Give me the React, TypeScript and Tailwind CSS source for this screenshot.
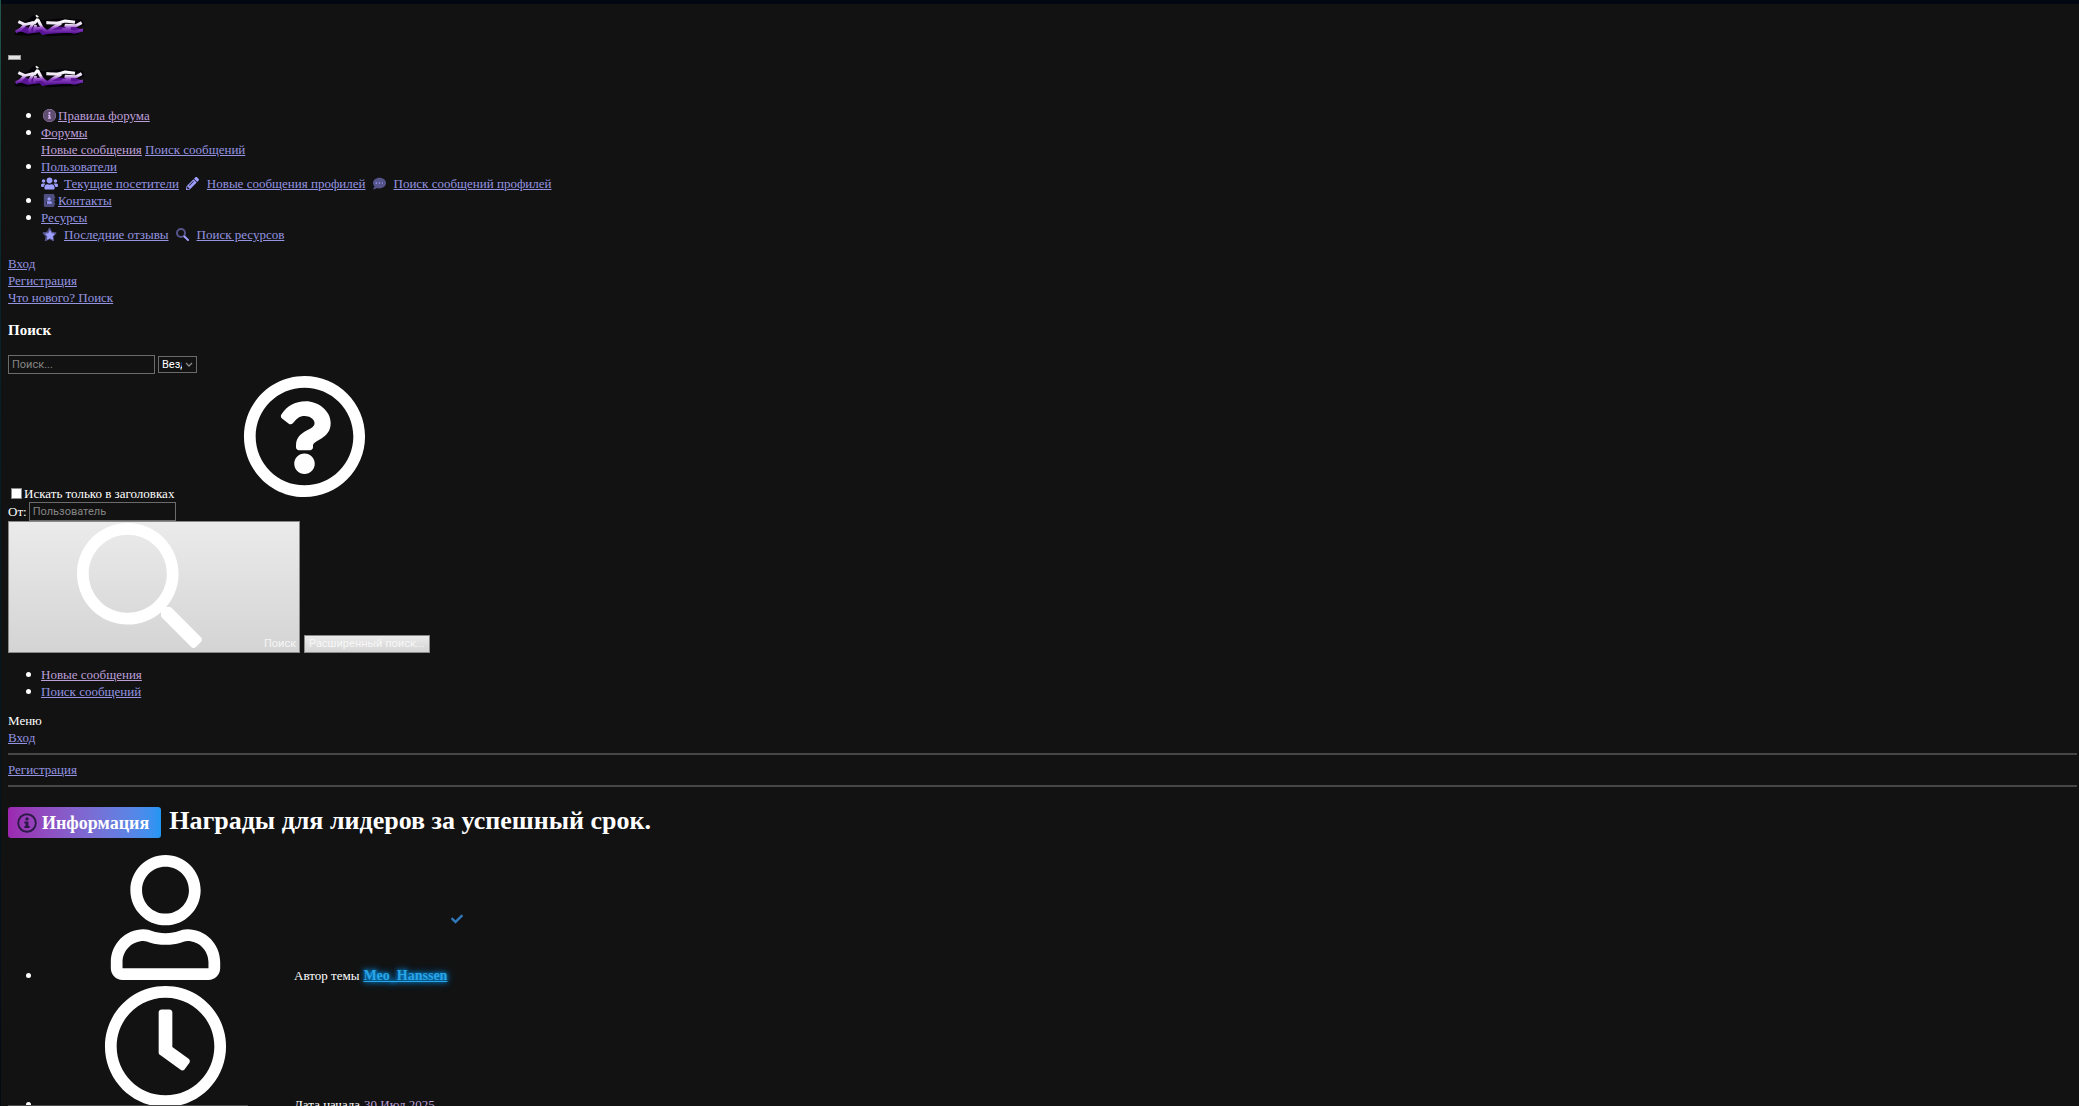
import type { ReactNode } from 'react';
import {
  FaAddressBook,
  FaCheck,
  FaCommentDots,
  FaInfoCircle,
  FaPencilAlt,
  FaRegClock,
  FaRegQuestionCircle,
  FaRegUser,
  FaStar,
  FaUsers,
} from 'react-icons/fa';

const searchPath =
  'M508.5 468.9L387.1 347.5c-2.3-2.3-5.3-3.5-8.5-3.5h-13.2c31.5-36.5 50.6-84 50.6-136C416 93.1 322.9 0 208 0S0 93.1 0 208s93.1 208 208 208c52 0 99.5-19.1 136-50.6v13.2c0 3.2 1.3 6.2 3.5 8.5l121.4 121.4c4.7 4.7 12.3 4.7 17 0l22.6-22.6c4.7-4.7 4.7-12.3 0-17zM208 368c-88.4 0-160-71.6-160-160S119.6 48 208 48s160 71.6 160 160-71.6 160-160 160z';

function Logo({ id }: { id: string }) {
  return (
    <svg viewBox="40 40 216 72" className="block h-6 w-[72px]" aria-label="Maze" fill="none">
      <defs>
        <linearGradient id={id} gradientUnits="userSpaceOnUse" x1="0" y1="62" x2="0" y2="104">
          <stop offset="0" stopColor="#ffffff" />
          <stop offset="0.3" stopColor="#e9dcf2" />
          <stop offset="0.55" stopColor="#9347c4" />
          <stop offset="1" stopColor="#4a0a8c" />
        </linearGradient>
      </defs>
      <path d="M44 106L62 74L54 60L78 66L102 46L128 62L190 56L248 60L254 76L238 84L256 92L232 106L140 110L128 102L84 108Z" fill="#050308" />
      <path d="M48 98L66 84L78 80L92 88L104 80L128 82L148 92L168 80L196 82L214 78L232 84L252 90L232 100L190 100L150 102L128 106L120 98L84 102L66 96Z" fill="#5a1596" />
      <g stroke={`url(#${id})`} strokeWidth="9" strokeLinejoin="bevel">
        <path d="M56 66L76 75L63 88L48 97M76 75L102 68L90 88L92 100" />
        <path d="M103 72L114 59L126 82L142 99M108 76L103 97M104 87L130 85" />
        <path d="M140 69L184 71L160 84L144 97L200 93" />
        <path d="M170 72L196 64L226 68M246 69L230 78L196 77L212 87L188 90L224 98L250 91" />
      </g>
      <path d="M107 48L111 45L118 51L112 54ZM140 65L149 66L144 71Z" fill="#e8f0e4" />
    </svg>
  );
}

function Anchor({ children, visited = false }: { children: ReactNode; visited?: boolean }) {
  return (
    <a href="#" className={visited ? 'text-[#bd9fd8] underline' : 'text-[#9494e0] underline'}>
      {children}
    </a>
  );
}

function IconLink({ icon, children }: { icon: ReactNode; children: ReactNode }) {
  return (
    <a href="#" className="flex items-center gap-1.5 text-[#9e9eff]">
      <span className="flex w-[17px] justify-center">{icon}</span>
      <span className="text-[#9494e0] underline">{children}</span>
    </a>
  );
}

function Item({ children }: { children: ReactNode }) {
  return (
    <li className="flex">
      <span className="mt-1.5 mr-2.5 h-[5px] w-[5px] rounded-full bg-white" />
      <div>{children}</div>
    </li>
  );
}

function TallItem({ icon, children }: { icon: ReactNode; children: ReactNode }) {
  return (
    <li className="flex items-end">
      <span className="mr-[9px] mb-1.5 h-[5px] w-[5px] rounded-full bg-white" />
      <span className="mr-1 mb-1 flex w-[250px] justify-center">{icon}</span>
      {children}
    </li>
  );
}

const fieldClass =
  'h-[19px] w-[147px] border border-[#6b6b6b] bg-[#121212] px-[3px] font-[Roboto,sans-serif] text-[11px] text-white placeholder:text-[#858585]';

export default function App() {
  return (
    <div className="relative h-screen overflow-hidden bg-[#121212] pt-[13px] pr-0.5 pl-2 font-['Liberation_Serif',serif] text-[13px] leading-[17px] text-white">
      <div className="absolute inset-x-0 top-0 h-1 bg-[#020812]" />
      <div className="absolute inset-y-0 left-0 w-px bg-linear-to-b from-[#23584c] via-[#07242a] via-25% to-[#030a14]" />
      <div className="absolute bottom-0 left-2 h-px w-60 bg-[#4a4a4a]" />

      <header>
        <a href="#" className="ml-[5px] block w-[72px]">
          <Logo id="logo-top" />
        </a>
        <button
          aria-label="Меню"
          className="mt-[18px] block h-[5px] w-[13px] border border-[#9a9a9a] bg-[#e2e2e2]"
        />
        <a href="#" className="mt-1 ml-[5px] block w-[72px]">
          <Logo id="logo-nav" />
        </a>
      </header>

      <nav className="mt-[19px]">
        <ul className="pl-[18px]">
          <Item>
            <a href="#" className="flex items-center text-[#d0adf0]">
              <span className="flex w-[17px] justify-center">
                <span className="flex h-[13px] w-[13px] items-center justify-center rounded-full bg-[#d8b8f4]">
                  <FaInfoCircle className="h-[13px] w-[13px] shrink-0 text-[#5f4e6f]" />
                </span>
              </span>
              <span className="text-[#bd9fd8] underline">Правила форума</span>
            </a>
          </Item>
          <Item>
            <Anchor visited>Форумы</Anchor>
            <div>
              <Anchor visited>Новые сообщения</Anchor> <Anchor>Поиск сообщений</Anchor>
            </div>
          </Item>
          <Item>
            <Anchor>Пользователи</Anchor>
            <div className="flex gap-[5px]">
              <IconLink icon={<FaUsers className="h-[17px] w-[17px]" />}>Текущие посетители</IconLink>
              <IconLink icon={<FaPencilAlt className="h-[13px] w-[13px]" />}>Новые сообщения профилей</IconLink>
              <IconLink
                icon={
                  <span className="flex bg-[linear-gradient(#9e9eff,#9e9eff)] bg-[length:8px_3px] bg-center bg-no-repeat">
                    <FaCommentDots className="h-[13px] w-[13px] text-[#55558c]" />
                  </span>
                }
              >
                Поиск сообщений профилей
              </IconLink>
            </div>
          </Item>
          <Item>
            <a href="#" className="flex items-center text-[#9e9eff]">
              <span className="flex w-[17px] justify-center">
                <span className="flex bg-[linear-gradient(#9e9eff,#9e9eff)] bg-[length:6px_7px] bg-center bg-no-repeat">
                  <FaAddressBook className="h-[13px] w-[13px] text-[#4e4e80]" />
                </span>
              </span>
              <span className="text-[#9494e0] underline">Контакты</span>
            </a>
          </Item>
          <Item>
            <Anchor>Ресурсы</Anchor>
            <div className="flex gap-[5px]">
              <IconLink
                icon={
                  <span className="grid place-items-center">
                    <FaStar className="col-start-1 row-start-1 h-[15px] w-[15px] text-[#55558c]" />
                    <FaStar className="col-start-1 row-start-1 h-[10px] w-[10px]" />
                  </span>
                }
              >
                Последние отзывы
              </IconLink>
              <IconLink
                icon={
                  <svg viewBox="0 0 13 13" className="h-[13px] w-[13px]" fill="none">
                    <circle cx="5" cy="5" r="4" stroke="#55558c" strokeWidth="2" />
                    <path d="M8.5 8.5L12 12" stroke="#9e9eff" strokeWidth="2" strokeLinecap="round" />
                  </svg>
                }
              >
                Поиск ресурсов
              </IconLink>
            </div>
          </Item>
        </ul>
      </nav>

      <div className="mt-3 flex flex-col items-start">
        <Anchor>Вход</Anchor>
        <Anchor>Регистрация</Anchor>
        <Anchor>Что нового? Поиск</Anchor>
      </div>

      <form>
        <h3 className="mt-3.5 text-[15px] leading-5 font-bold">Поиск</h3>
        <div className="mt-[15px] flex items-center gap-[3px]">
          <input type="text" aria-label="Поиск" placeholder="Поиск..." className={fieldClass} />
          <span className="relative flex">
            <select
              aria-label="Где искать"
              className="h-[17px] w-[39px] appearance-none border border-[#6b6b6b] bg-[#121212] pr-3.5 pl-[3px] font-[Roboto,sans-serif] text-[11px] leading-[15px] text-white"
            >
              <option>Везде</option>
            </select>
            <svg viewBox="0 0 8 5" className="absolute top-[6px] right-1 h-[5px] w-2" fill="none">
              <path d="M1 1L4 4L7 1" stroke="#8a8a8a" strokeWidth="1.3" />
            </svg>
          </span>
        </div>
        <div className="flex items-end">
          <label className="flex items-center">
            <input
              type="checkbox"
              className="mr-0.5 ml-[3px] h-[11px] w-[11px] appearance-none border border-[#8a8a8a] bg-white"
            />
            Искать только в заголовках
          </label>
          <span className="mb-[3px] ml-[5px] flex w-[250px] justify-center">
            <FaRegQuestionCircle className="h-[125px] w-[125px]" />
          </span>
        </div>
        <div className="flex items-center gap-0.5">
          <label htmlFor="author">От:</label>
          <input id="author" type="text" placeholder="Пользователь" className={fieldClass} />
        </div>
        <div className="flex items-end gap-1 font-[Roboto,sans-serif] text-[11px] text-[#f7f7f7]">
          <button
            type="button"
            className="flex h-[132px] w-[292px] items-end border border-[#8a8a8a] bg-linear-to-b from-[#ebebeb] to-[#d4d4d4] pl-[5px] leading-4"
          >
            <span className="mb-1 flex w-[250px] justify-center text-white">
              <svg viewBox="0 0 512 512" className="h-[125px] w-[125px]" fill="currentColor">
                <path d={searchPath} />
              </svg>
            </span>
            Поиск
          </button>
          <button
            type="button"
            className="h-[18px] border border-[#8a8a8a] bg-linear-to-b from-[#ebebeb] to-[#d4d4d4] px-1 leading-4"
          >
            Расширенный поиск...
          </button>
        </div>
      </form>

      <ul className="mt-[13px] pl-[18px]">
        <Item>
          <Anchor visited>Новые сообщения</Anchor>
        </Item>
        <Item>
          <Anchor>Поиск сообщений</Anchor>
        </Item>
      </ul>

      <div className="mt-3">Меню</div>
      <Anchor>Вход</Anchor>
      <hr className="mt-[7px] mb-1.5 h-0.5 border-0 bg-[#464646]" />
      <Anchor>Регистрация</Anchor>
      <hr className="mt-[7px] h-0.5 border-0 bg-[#464646]" />

      <h1 className="mt-5 flex items-start gap-2 text-[26px] leading-7 font-bold">
        <span className="flex h-[31px] items-center gap-[5px] rounded-[3px] bg-linear-to-r from-[#9c27b0] to-[#2196f3] pr-3 pl-[9px] text-[18px]">
          <svg viewBox="0 0 20 20" className="h-5 w-5" fill="none">
            <circle cx="10" cy="10" r="8.8" stroke="#2b1a45" strokeWidth="1.9" />
            <circle cx="10" cy="5.9" r="1.7" fill="#2b1a45" />
            <path d="M7.4 8.6H11.4V13H12.6V15H7.4V13H8.6V10.6H7.4Z" fill="#2b1a45" />
          </svg>
          Информация
        </span>
        Награды для лидеров за успешный срок.
      </h1>

      <ul className="mt-[17px] pl-[18px]">
        <TallItem icon={<FaRegUser className="h-[125px] w-[125px]" />}>
          <span className="mr-1">Автор темы</span>
          <a
            href="#"
            className="text-[14px] font-bold text-[#2aa5e6] underline [text-shadow:0_0_4px_#00a2ff,0_0_8px_#0080e0]"
          >
            Meo_Hanssen
          </a>
          <FaCheck className="mb-[59px] ml-1 h-3 w-3 text-[#2f77b8]" />
        </TallItem>
        <TallItem icon={<FaRegClock className="h-[125px] w-[125px]" />}>
          <span className="mr-1">Дата начала</span>
          <a href="#" className="text-[#bd9fd8]">
            30 Июл 2025
          </a>
        </TallItem>
      </ul>
    </div>
  );
}
